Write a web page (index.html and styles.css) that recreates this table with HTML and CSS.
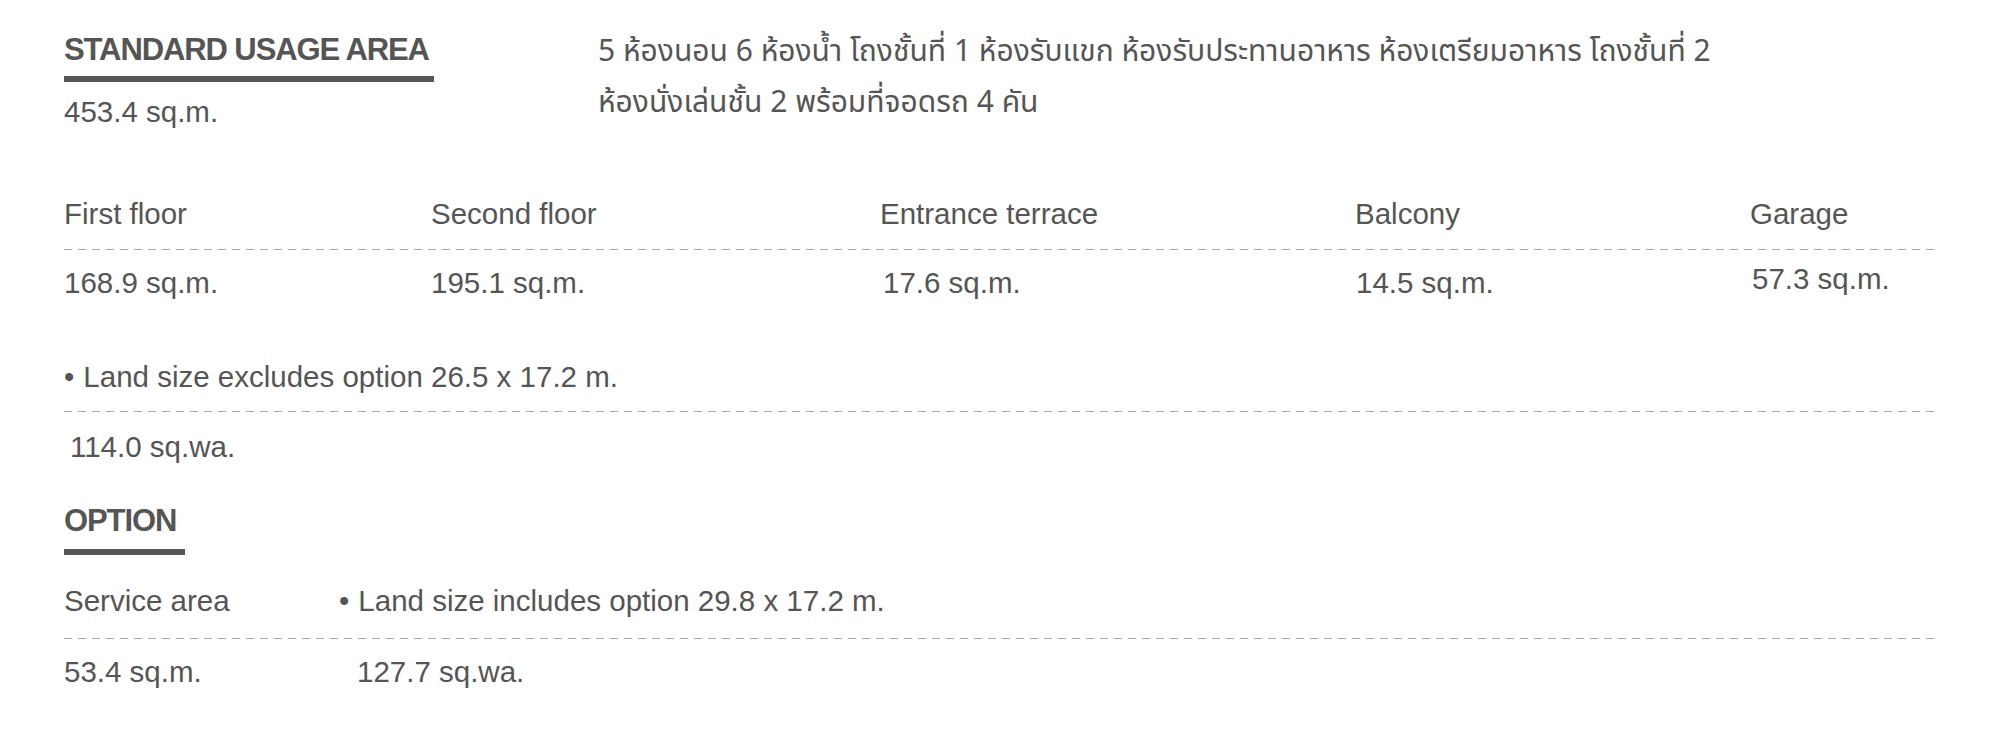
FILE: index.html
```html
<!DOCTYPE html>
<html lang="en">
<head>
<meta charset="utf-8">
<title>Usage area</title>
<link rel="stylesheet" href="styles.css">
</head>
<body>
<main class="spec">
  <section class="top">
    <div class="top-left">
      <h2 class="heading heading-wide">STANDARD USAGE AREA</h2>
      <p class="val">453.4 sq.m.</p>
    </div>
    <p class="thai">5 ห้องนอน 6 ห้องน้ำ โถงชั้นที่ 1 ห้องรับแขก ห้องรับประทานอาหาร ห้องเตรียมอาหาร โถงชั้นที่ 2<br>ห้องนั่งเล่นชั้น 2 พร้อมที่จอดรถ 4 คัน</p>
  </section>

  <section class="floors">
    <div class="floor-head dashed">
      <span>First floor</span>
      <span>Second floor</span>
      <span>Entrance terrace</span>
      <span>Balcony</span>
      <span>Garage</span>
    </div>
    <div class="floor-vals">
      <span>168.9 sq.m.</span>
      <span>195.1 sq.m.</span>
      <span class="nudge">17.6 sq.m.</span>
      <span class="nudge1">14.5 sq.m.</span>
      <span class="nudge-up">57.3 sq.m.</span>
    </div>
  </section>

  <section class="land">
    <div class="land-head dashed"><span class="bullet">•</span>Land size excludes option 26.5 x 17.2 m.</div>
    <div class="land-val">114.0 sq.wa.</div>
  </section>

  <section class="option">
    <h2 class="heading heading-short">OPTION</h2>
    <div class="opt-head dashed">
      <span>Service area</span>
      <span><span class="bullet">•</span>Land size includes option 29.8 x 17.2 m.</span>
    </div>
    <div class="opt-vals">
      <span>53.4 sq.m.</span>
      <span class="indent">127.7 sq.wa.</span>
    </div>
  </section>
</main>
</body>
</html>
```

FILE: styles.css
```css
html, body {
  margin: 0;
  padding: 0;
  background: #ffffff;
}

body {
  font-family: "Liberation Sans", Arial, sans-serif;
  color: #555555;
  font-size: 29.5px;
}

.spec {
  width: 1872px;
  padding: 30px 0 0 64px;
}

p { margin: 0; }

.top {
  display: flex;
  align-items: flex-start;
}

.top-left {
  width: 534px;
  flex: none;
}

.heading {
  margin: 0;
  font-size: 31px;
  font-weight: 700;
  color: #555555;
  letter-spacing: -1.1px;
  line-height: 40px;
  display: inline-block;
  border-bottom: 6px solid #555555;
}

.heading-wide {
  width: 370px;
  padding-bottom: 6px;
}

.heading-short {
  width: 121px;
  padding-bottom: 8px;
}

.val {
  margin-top: 14px;
  line-height: 32px;
}

.thai {
  font-family: "Noto Sans Thai", "Noto Sans Thai Looped", "Noto Sans", "DejaVu Sans", sans-serif;
  font-size: 30px;
  line-height: 51px;
  color: #555555;
  margin-top: -3px;
}

.dashed {
  background: repeating-linear-gradient(90deg, #a8a8a8 0 8px, transparent 8px 14px) left bottom / 100% 1px no-repeat;
}

.floors {
  margin-top: 69px;
}

.floor-head,
.floor-vals {
  display: grid;
  grid-template-columns: 367px 449px 475px 395px 1fr;
}

.floor-head {
  line-height: 32px;
  padding-bottom: 20px;
}

.floor-vals {
  line-height: 32px;
  padding-top: 17px;
}

.nudge { padding-left: 3px; }
.nudge1 { padding-left: 1px; }
.nudge-up { padding-left: 2px; margin-top: -4px; }

.land {
  margin-top: 62px;
}

.land-head {
  line-height: 32px;
  padding-bottom: 19px;
}

.bullet {
  margin-right: 9px;
}

.land-val {
  padding: 19px 0 0 6px;
  line-height: 32px;
}

.option {
  margin-top: 38px;
}

.opt-head,
.opt-vals {
  display: grid;
  grid-template-columns: 275px 1fr;
}

.opt-head {
  margin-top: 30px;
  line-height: 32px;
  padding-bottom: 22px;
}

.opt-vals {
  line-height: 32px;
  padding-top: 17px;
}

.indent { padding-left: 18px; }
```
